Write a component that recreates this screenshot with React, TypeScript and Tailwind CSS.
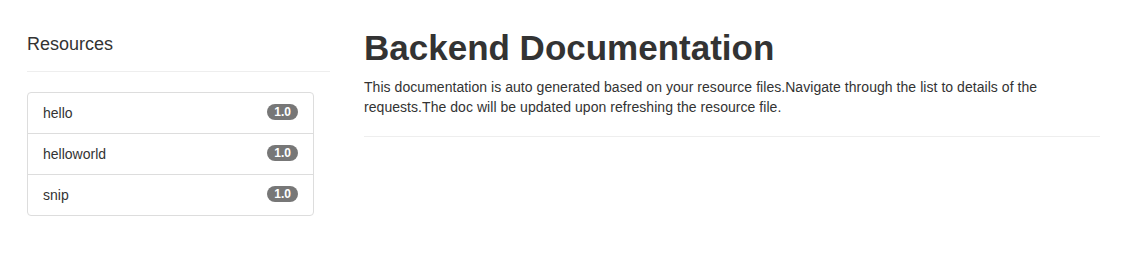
const resources = ["hello", "helloworld", "snip"];

export default function App() {
  return (
    <div className="flex min-h-[258px] bg-white pl-[27px] pt-[28px] font-['Liberation_Sans',Arial,sans-serif] text-[#333]">
      <aside className="w-[303px] shrink-0">
        <h4 className="mt-[6px] text-[18px] leading-[20px]">Resources</h4>
        <hr className="mt-[17px] border-t border-[#eee]" />
        <ul className="mt-[20px] w-[287px] rounded-[4px] border border-[#ddd]">
          {resources.map((name, i) => (
            <li
              key={name}
              className={`flex items-start justify-between px-[15px] py-[10px] text-[14px] leading-[20px] ${
                i < resources.length - 1 ? "border-b border-[#ddd]" : ""
              }`}
            >
              <span>{name}</span>
              <span className="mt-[1px] rounded-full bg-[#777] px-[7px] py-[1px] text-[12px] font-bold leading-[14px] text-white">
                1.0
              </span>
            </li>
          ))}
        </ul>
      </aside>
      <main className="ml-[34px] w-[736px]">
        <h1 className="text-[35px] font-bold leading-[40px]">Backend Documentation</h1>
        <p className="mt-[9px] text-[14px] leading-[20px] tracking-[0.05px]">
          This documentation is auto generated based on your resource files.Navigate through the list to details of the
          requests.The doc will be updated upon refreshing the resource file.
        </p>
        <hr className="mt-[19px] border-t border-[#eee]" />
      </main>
    </div>
  );
}
